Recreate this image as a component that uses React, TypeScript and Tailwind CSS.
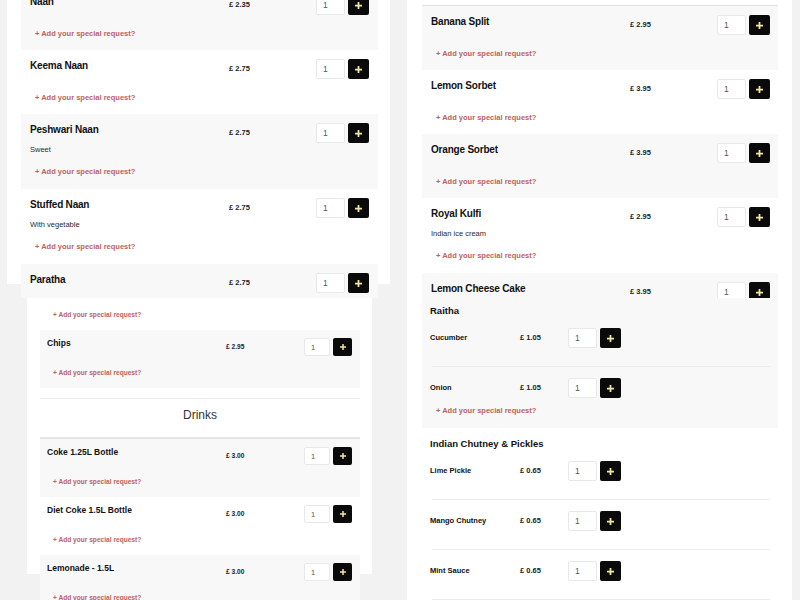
import React from 'react'

// menu screenshots, four panels in a 2x2 grid

type Item = { name: string; price: string; desc?: string; shaded?: boolean }

const font = "font-['Liberation_Sans',Arial,sans-serif]"

function Plus({ size = 7 }: { size?: number }) {
  return (
    <svg width={size} height={size} viewBox="0 0 8 8">
      <path d="M3 0h2v3h3v2H5v3H3V5H0V3h3z" fill="#eee8a2" />
    </svg>
  )
}

function QtyLg() {
  return (
    <div className="flex gap-[3px]">
      <input
        type="text"
        defaultValue="1"
        className="w-[29px] h-[20px] bg-white border border-[#e8e8e8] rounded-[2px] pl-[6px] text-[8.5px] text-[#555] outline-none"
      />
      <button className="w-[21px] h-[20px] bg-[#0a0a0a] rounded-[2px] flex items-center justify-center">
        <Plus />
      </button>
    </div>
  )
}

function QtySm() {
  return (
    <div className="flex gap-[3px]">
      <input
        type="text"
        defaultValue="1"
        className="w-[26px] h-[18px] bg-white border border-[#e8e8e8] rounded-[2px] pl-[6px] text-[7.5px] text-[#555] outline-none"
      />
      <button className="w-[19px] h-[18px] bg-[#0a0a0a] rounded-[2px] flex items-center justify-center">
        <Plus size={6} />
      </button>
    </div>
  )
}

function LgRow({ name, price, desc, shaded }: Item) {
  return (
    <div className={`${shaded ? 'bg-[#f8f8f8]' : 'bg-white'} pt-[9px] pl-[9px] ${desc ? 'pb-[11px]' : 'pb-[10px]'}`}>
      <div className="flex items-start">
        <div className="w-[199px] text-[10px] leading-[13px] font-bold text-[#111] tracking-[-0.2px]">{name}</div>
        <div className="w-[87px] h-[20px] flex items-center text-[7.5px] font-bold text-[#222]">{price}</div>
        <QtyLg />
      </div>
      {desc && <p className="mt-[1px] text-[7.5px] leading-[12px] text-[#2a2a2a]">{desc}</p>}
      <div className={`${desc ? 'mt-[10px]' : 'mt-[13px]'} ml-[5px] text-[7.5px] leading-[12px] font-bold text-[#bb625f]`}>
        + Add your special request?
      </div>
    </div>
  )
}

function SmRow({ name, price, shaded }: Item) {
  return (
    <div className={`${shaded ? 'bg-[#f8f8f8]' : 'bg-white'} pt-[8px] pl-[7px] pb-[10px]`}>
      <div className="flex items-start">
        <div className="w-[179px] text-[8.5px] leading-[11px] font-bold text-[#111]">{name}</div>
        <div className="w-[78px] h-[18px] flex items-center text-[6.6px] font-bold text-[#222]">{price}</div>
        <QtySm />
      </div>
      <div className="mt-[12px] ml-[6px] text-[6.6px] leading-[10px] font-bold text-[#bb625f]">
        + Add your special request?
      </div>
    </div>
  )
}

function SubItem({ name, price, line }: { name: string; price: string; line?: boolean }) {
  return (
    <>
      <div className="flex items-center pt-[11px] pb-[18px]">
        <div className="w-[90px] text-[7.5px] font-bold text-[#111]">{name}</div>
        <div className="w-[48px] text-[7.5px] font-bold text-[#222]">{price}</div>
        <QtyLg />
      </div>
      {line && <div className="ml-[2px] mr-[8px] h-px bg-[#ececec]" />}
    </>
  )
}

const naan: Item[] = [
  { name: 'Naan', price: '£ 2.35', shaded: true },
  { name: 'Keema Naan', price: '£ 2.75' },
  { name: 'Peshwari Naan', price: '£ 2.75', desc: 'Sweet', shaded: true },
  { name: 'Stuffed Naan', price: '£ 2.75', desc: 'With vegetable' },
  { name: 'Paratha', price: '£ 2.75', shaded: true },
]

const desserts: Item[] = [
  { name: 'Banana Split', price: '£ 2.95', shaded: true },
  { name: 'Lemon Sorbet', price: '£ 3.95' },
  { name: 'Orange Sorbet', price: '£ 3.95', shaded: true },
  { name: 'Royal Kulfi', price: '£ 2.95', desc: 'Indian ice cream' },
  { name: 'Lemon Cheese Cake', price: '£ 3.95', shaded: true },
]

const drinks: Item[] = [
  { name: 'Coke 1.25L Bottle', price: '£ 3.00', shaded: true },
  { name: 'Diet Coke 1.5L Bottle', price: '£ 3.00' },
  { name: 'Lemonade - 1.5L', price: '£ 3.00', shaded: true },
]

export default function App() {
  return (
    <div className={`${font} flex flex-wrap w-[800px] h-[600px] overflow-hidden bg-[#f2f2f2]`}>
      {/* top left: breads */}
      <div className="w-[400px] h-[298px] overflow-hidden pl-[7px] pr-[10px]">
        <div className="bg-white h-[298px] pl-[14px] pr-[12px]">
          <div className="-mt-[14px]">
            {naan.map((it) => (
              <LgRow key={it.name} {...it} />
            ))}
          </div>
        </div>
      </div>

      {/* top right: desserts */}
      <div className="w-[400px] h-[298px] overflow-hidden pl-[7px] pr-[8px]">
        <div className="bg-white h-[298px] pl-[15px] pr-[14px]">
          <div className="h-[6px] border-b border-[#e2e2e2]" />
          {desserts.map((it) => (
            <LgRow key={it.name} {...it} />
          ))}
        </div>
      </div>

      {/* bottom left: sides + drinks */}
      <div className="w-[400px] h-[302px] overflow-hidden pl-[27px] pr-[28px]">
        <div className="bg-white h-[302px] pl-[13px] pr-[12px]">
          <div className="-mt-[26px]">
            <SmRow name="Pilau Rice" price="£ 2.50" />
            <SmRow name="Chips" price="£ 2.95" shaded />
            <div className="mt-[10px] border-t border-[#ededed] border-b-2 border-b-[#e6e6e6] h-[41px] pt-[9px] text-center text-[12px] leading-[14px] text-[#333]">
              Drinks
            </div>
            {drinks.map((it) => (
              <SmRow key={it.name} {...it} />
            ))}
          </div>
        </div>
      </div>

      {/* bottom right: raitha + chutneys */}
      <div className="w-[400px] h-[302px] overflow-hidden pl-[7px] pr-[8px]">
        <div className="bg-white h-[302px] pl-[15px] pr-[14px]">
          <div className="bg-[#f8f8f8] pl-[8px] pt-[6px] pb-[11px]">
            <div className="text-[9.5px] leading-[13px] font-bold text-[#111]">Raitha</div>
            <SubItem name="Cucumber" price="£ 1.05" line />
            <div className="flex items-center pt-[11px]">
              <div className="w-[90px] text-[7.5px] font-bold text-[#111]">Onion</div>
              <div className="w-[48px] text-[7.5px] font-bold text-[#222]">£ 1.05</div>
              <QtyLg />
            </div>
            <div className="mt-[7px] ml-[6px] text-[7.5px] leading-[12px] font-bold text-[#bb625f]">
              + Add your special request?
            </div>
          </div>
          <div className="pl-[8px] pt-[9px]">
            <div className="text-[9.5px] leading-[13px] font-bold text-[#111]">Indian Chutney &amp; Pickles</div>
            <SubItem name="Lime Pickle" price="£ 0.65" line />
            <SubItem name="Mango Chutney" price="£ 0.65" line />
            <SubItem name="Mint Sauce" price="£ 0.65" line />
          </div>
        </div>
      </div>
    </div>
  )
}
